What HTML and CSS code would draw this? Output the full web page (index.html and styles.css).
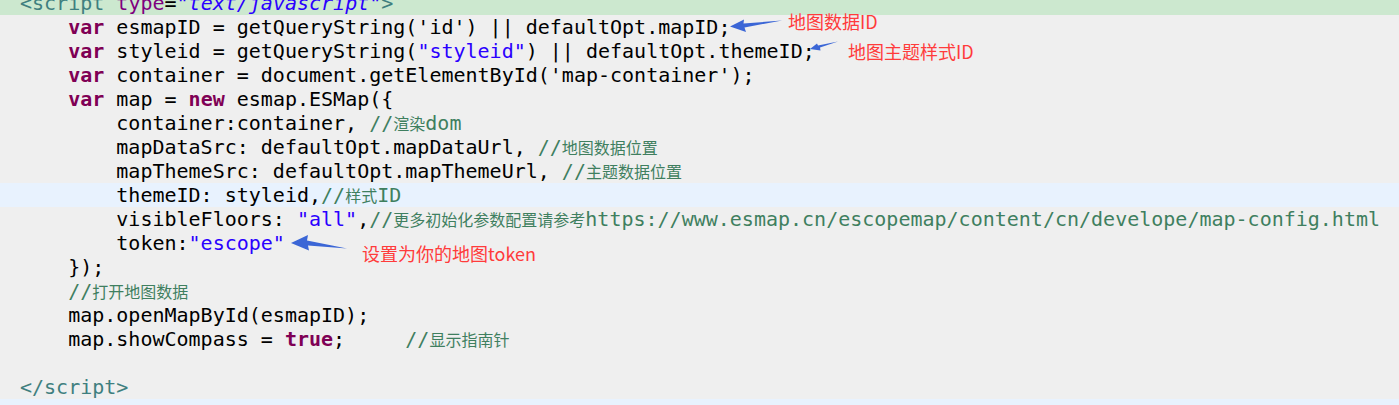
FILE: index.html
```html
<!DOCTYPE html>
<html lang="en">
<head>
  <meta charset="UTF-8">
  <title>esmap init</title>
  <link rel="stylesheet" href="styles.css">
</head>
<body>

  <div class="page">
    <div class="code">
      <div class="line hl-green"><span class="tag">&lt;script</span> <span class="attr">type</span>=<span class="val">"text/javascript"</span><span class="tag">&gt;</span></div>
      <div class="line">    <span class="kw">var</span> esmapID = getQueryString('id') || defaultOpt.mapID;</div>
      <div class="line">    <span class="kw">var</span> styleid = getQueryString(<span class="str">"styleid"</span>) || defaultOpt.themeID;</div>
      <div class="line">    <span class="kw">var</span> container = document.getElementById('map-container');</div>
      <div class="line">    <span class="kw">var</span> map = <span class="kw">new</span> esmap.ESMap({</div>
      <div class="line">        container:container, <span class="cm">//<span class="zh">渲染</span>dom</span></div>
      <div class="line">        mapDataSrc: defaultOpt.mapDataUrl, <span class="cm">//<span class="zh">地图数据位置</span></span></div>
      <div class="line">        mapThemeSrc: defaultOpt.mapThemeUrl, <span class="cm">//<span class="zh">主题数据位置</span></span></div>
      <div class="line hl-blue">        themeID: styleid,<span class="cm">//<span class="zh">样式</span>ID</span></div>
      <div class="line">        visibleFloors: <span class="str">"all"</span>,<span class="cm">//<span class="zh">更多初始化参数配置请参考</span>https://www.esmap.cn/escopemap/content/cn/develope/map-config.html</span></div>
      <div class="line">        token:<span class="str">"escope"</span></div>
      <div class="line">    });</div>
      <div class="line">    <span class="cm">//<span class="zh">打开地图数据</span></span></div>
      <div class="line">    map.openMapById(esmapID);</div>
      <div class="line">    map.showCompass = <span class="kw">true</span>;     <span class="cm">//<span class="zh">显示指南针</span></span></div>
      <div class="line"> </div>
      <div class="line"><span class="tag">&lt;/script&gt;</span></div>
      <div class="line hl-blue"> </div>
    </div>

    <!-- callouts drawn over the code -->
    <svg class="arrows" width="1399" height="405" viewBox="0 0 1399 405">
      <polygon points="730,26.5 744,19.5 743.5,23.5 782,20.5 744.5,27.5 746,32" />
      <polygon points="810,49 817,43.5 818,45.5 838,41.5 820,47.5 820.5,50.5" />
      <polygon points="291,243 308,235 307,240.5 347,248.5 308,245.5 309,250.5" />
    </svg>
    <span class="note note-map">地图数据ID</span>
    <span class="note note-theme">地图主题样式ID</span>
    <span class="note note-token">设置为你的地图token</span>
  </div>

</body>
</html>
```

FILE: styles.css
```css
body {
  margin: 0;
  background-color: #efefef;
  overflow: hidden;
}

.page {
  position: relative;
  height: 405px;
  overflow: hidden;
}

.code {
  margin-top: -9px;
  font-family: "DejaVu Sans Mono", "Liberation Mono", monospace;
  font-size: 20px;
  color: #000;
}

.line {
  height: 24px;
  line-height: 24px;
  padding-left: 20px;
  white-space: pre;
}

.hl-green {
  background-color: #cce8cf;
}

.hl-blue {
  background-color: #e8f2fe;
}

.kw {
  color: #7f0055;
  font-weight: bold;
}

.str {
  color: #2a00ff;
}

.cm {
  color: #3f7f5f;
}

.zh {
  font-family: "Noto Sans CJK SC", sans-serif;
  font-size: 16px;
}

.tag {
  color: #3f7f7f;
}

.attr {
  color: #7f007f;
}

.val {
  color: #2a00ff;
  font-style: italic;
}

.arrows {
  position: absolute;
  top: 0;
  left: 0;
  pointer-events: none;
  fill: #3b66d6;
}

.note {
  position: absolute;
  font-family: "Noto Sans CJK SC", sans-serif;
  font-size: 18px;
  line-height: 18px;
  color: #ff3b3b;
  white-space: nowrap;
}

.note-map {
  top: 12px;
  left: 788px;
}

.note-theme {
  top: 42px;
  left: 848px;
}

.note-token {
  top: 244px;
  left: 362px;
}
```
